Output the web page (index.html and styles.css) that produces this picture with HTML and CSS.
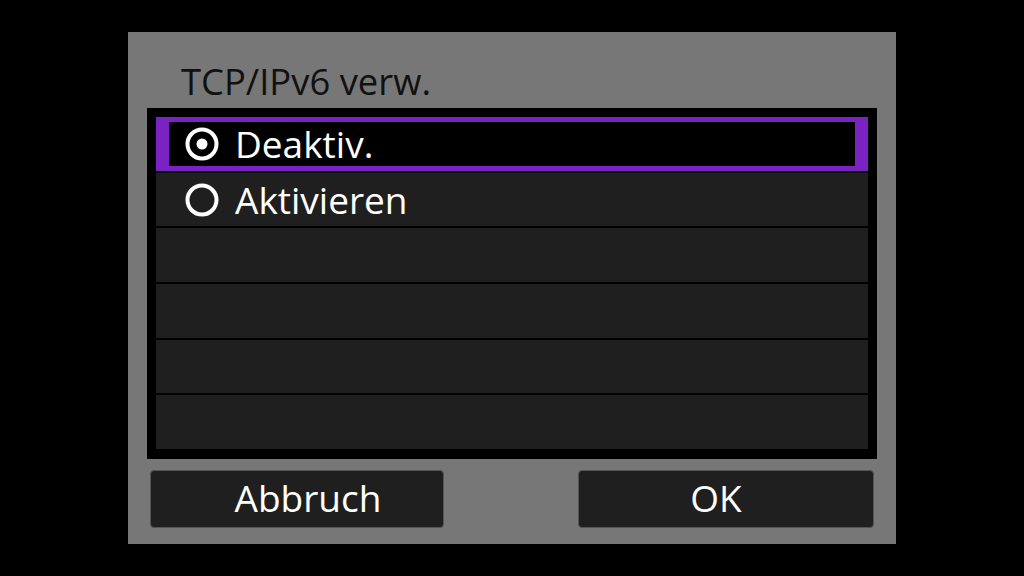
FILE: index.html
```html
<!DOCTYPE html>
<html lang="de">
<head>
<meta charset="utf-8">
<title>TCP/IPv6 verw.</title>
<link rel="stylesheet" href="styles.css">
</head>
<body>
<div class="dialog">
  <div class="title">TCP/IPv6 verw.</div>
  <div class="list">
    <div class="row selected">
      <svg class="radio" viewBox="0 0 34 34" width="34" height="34"><circle cx="17" cy="17" r="14.5" fill="none" stroke="#fff" stroke-width="4"/><circle cx="17" cy="17" r="5.5" fill="#fff"/></svg>
      <span class="label">Deaktiv.</span>
    </div>
    <div class="row">
      <svg class="radio" viewBox="0 0 34 34" width="34" height="34"><circle cx="17" cy="17" r="14.5" fill="none" stroke="#fff" stroke-width="4"/></svg>
      <span class="label">Aktivieren</span>
    </div>
    <div class="row"></div>
    <div class="row"></div>
    <div class="row"></div>
    <div class="row"></div>
  </div>
  <div class="buttons">
    <div class="btn btn-cancel">Abbruch</div>
    <div class="btn btn-ok">OK</div>
  </div>
</div>
</body>
</html>
```

FILE: styles.css
```css
html, body {
  margin: 0;
  padding: 0;
  background: #000;
}
body {
  width: 1024px;
  height: 576px;
  display: flex;
  justify-content: center;
  align-items: center;
  font-family: "Open Sans", "Noto Sans", sans-serif;
}
.dialog {
  width: 768px;
  height: 512px;
  box-sizing: border-box;
  background: #777777;
  padding: 0 19px;
  display: flex;
  flex-direction: column;
}
.title {
  height: 76px;
  box-sizing: border-box;
  padding: 29px 0 0 34px;
  font-size: 36.4px;
  line-height: 40px;
  color: #111;
  white-space: nowrap;
}
.list {
  height: 351px;
  box-sizing: border-box;
  background: #000;
  padding: 9px 9px 10px;
  display: flex;
  flex-direction: column;
  gap: 2px;
}
.row {
  flex: 1;
  box-sizing: border-box;
  border: 5px solid transparent;
  border-left-width: 13px;
  border-right-width: 13px;
  background: #1f1f1f;
  display: flex;
  align-items: center;
  padding-left: 16px;
  gap: 16px;
  color: #fff;
  font-size: 37px;
  line-height: 1;
}
.row.selected {
  background: #000;
  border-color: #7b22c2;
}
.radio {
  display: block;
  flex: none;
}
.buttons {
  margin-top: 11px;
  padding: 0 3px;
  display: flex;
  justify-content: space-between;
}
.btn {
  width: 294px;
  height: 58px;
  box-sizing: border-box;
  background: #1f1f1f;
  border: 1px solid #555;
  border-radius: 4px;
  display: flex;
  align-items: center;
  justify-content: center;
  color: #fff;
  font-size: 37px;
  line-height: 1;
  padding-bottom: 3px;
}
.btn-cancel {
  padding-left: 22px;
}
.btn-ok {
  width: 296px;
  padding-right: 20px;
}
```
